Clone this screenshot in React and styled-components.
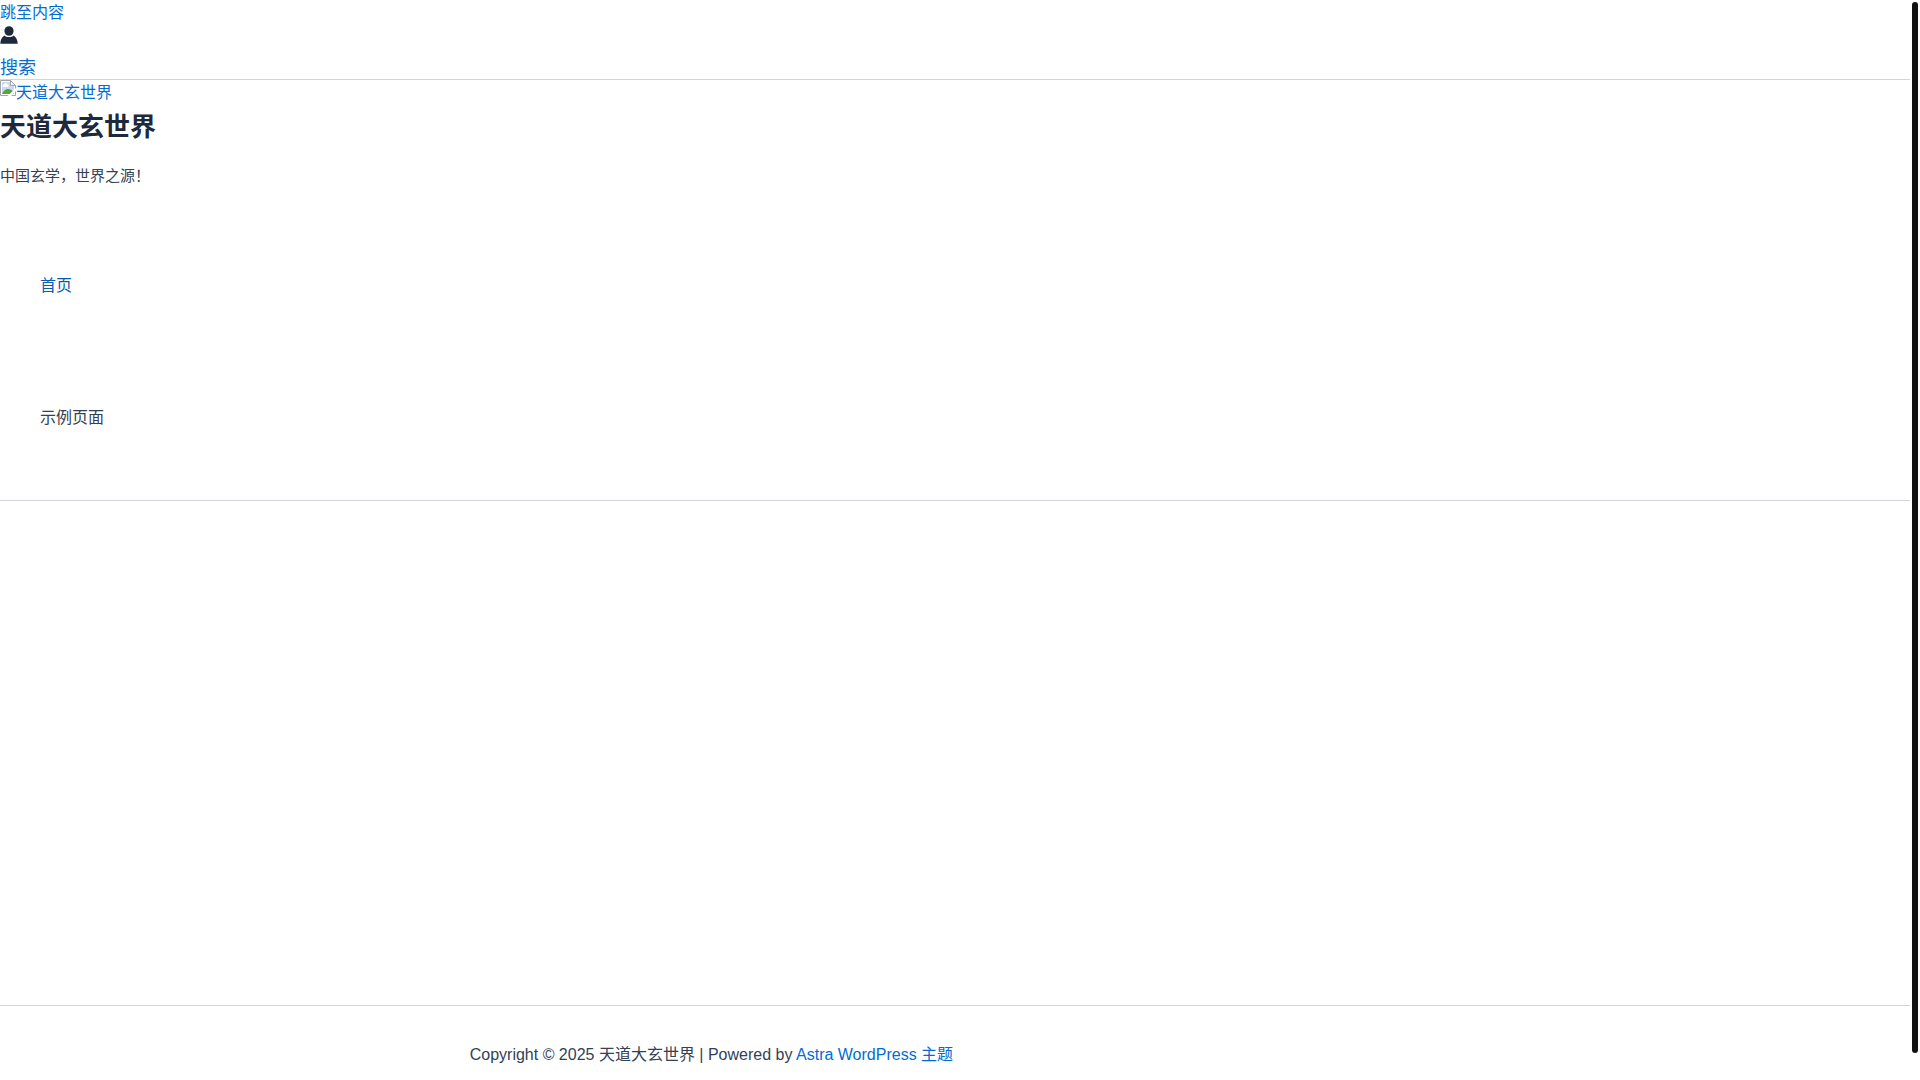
import React from "react";
import styled, { createGlobalStyle } from "styled-components";

const GlobalStyle = createGlobalStyle`
  * { box-sizing: border-box; }
  html { background: #fff; }
  body {
    margin: 0;
    color: #334155;
    font: 400 16px/26px "Liberation Sans", "Noto Sans CJK SC", sans-serif;
  }
`;

const Page = styled.div`
  min-height: 100vh;
  display: flex;
  flex-direction: column;
  padding-right: 10px;
`;

const Link = styled.a`
  color: ${(p) => (p.$current ? "#045cb4" : p.$plain ? "#334155" : "#046bd2")};
  text-decoration: none;
`;

const TopBar = styled.div`
  display: flex;
  flex-direction: column;
  align-items: flex-start;
  border-bottom: 1px solid #d1d5db;
`;

const AccountLink = styled.a`
  display: flex;
  height: 31px;
  color: #1e293b;
`;

const SearchLink = styled(Link)`
  font-size: 18px;
  line-height: 22px;
`;

const Header = styled.header`
  border-bottom: 1px solid #d1d5db;
`;

const LogoLink = styled(Link)`
  display: flex;
  height: 26px;
`;

const SiteTitle = styled.h1`
  margin: 0;
  color: #1e293b;
  font-size: 26px;
  font-weight: 600;
  line-height: 42px;
`;

const Tagline = styled.p`
  margin: 15px 0 0;
  font-size: 15px;
  line-height: 26px;
`;

const Menu = styled.ul`
  list-style: none;
  margin: 31px 0 16px;
  padding: 0 40px;
`;

const MenuItem = styled.li`
  display: flex;
  align-items: center;
  height: 132px;
`;

const Content = styled.main`
  flex: 1;
`;

const Footer = styled.footer`
  border-top: 1px solid #d1d5db;
  padding: 36px 20px 12px;
`;

const FooterGrid = styled.div`
  display: grid;
  grid-template-columns: 3fr 2fr;
  column-gap: 12px;
  max-width: 1200px;
  margin: 0 auto;
  text-align: center;
`;

const Copyright = styled.p`
  margin: 0;
`;

const ScrollThumb = styled.div`
  position: fixed;
  top: 2px;
  right: 2px;
  bottom: 27px;
  width: 6px;
  border-radius: 3px;
  background: #111;
`;

const AccountIcon = () => (
  <svg width="18" height="18" viewBox="0 0 18 18" fill="currentColor" aria-hidden="true">
    <ellipse cx="9" cy="5" rx="4.6" ry="4.8" />
    <path d="M4.300 9.500C5.600 10.500 7.200 11 9 11s3.400-.5 4.700-1.500c2.300 1.600 3.900 4.500 4 8.200H.3C.4 14 2 11.100 4.300 9.500Z" />
  </svg>
);

const MissingImageIcon = () => (
  <svg width="16" height="16" viewBox="0 0 16 16" aria-hidden="true">
    <path d="M.5.5h10l5 5v10H.5Z" fill="#fff" stroke="#a3a3a3" />
    <path d="M2 2h8v4h4v8H2Z" fill="#c6d9f7" />
    <path d="M3 7a1.500 1.500 0 0 1 1-2.600 2 2 0 0 1 3.800.3A1.300 1.300 0 0 1 8 7Z" fill="#fff" />
    <path d="M2 14c1-3 3.500-5 6-5 2 0 3.500 1 6 3v2Z" fill="#56a63b" />
    <path d="M10.500.5v5h5Z" fill="#f4f4f4" stroke="#a3a3a3" />
    <path d="M7.500 16 16 8v3l-5 5Z" fill="#fff" />
  </svg>
);

export default function App() {
  return (
    <>
      <GlobalStyle />
      <Page>
        <TopBar>
          <Link href="#content">跳至内容</Link>
          <AccountLink href="#account" aria-label="账户">
            <AccountIcon />
          </AccountLink>
          <SearchLink href="#search">搜索</SearchLink>
        </TopBar>
        <Header>
          <LogoLink href="#home">
            <MissingImageIcon />
            <span>天道大玄世界</span>
          </LogoLink>
          <SiteTitle>天道大玄世界</SiteTitle>
          <Tagline>中国玄学，世界之源！</Tagline>
          <nav>
            <Menu>
              <MenuItem>
                <Link $current href="#home" aria-current="page">首页</Link>
              </MenuItem>
              <MenuItem>
                <Link $plain href="#sample">示例页面</Link>
              </MenuItem>
            </Menu>
          </nav>
        </Header>
        <Content id="content" />
        <Footer>
          <FooterGrid>
            <Copyright>
              Copyright © 2025 天道大玄世界 | Powered by <Link href="#astra">Astra WordPress 主题</Link>
            </Copyright>
          </FooterGrid>
        </Footer>
      </Page>
      <ScrollThumb />
    </>
  );
}
